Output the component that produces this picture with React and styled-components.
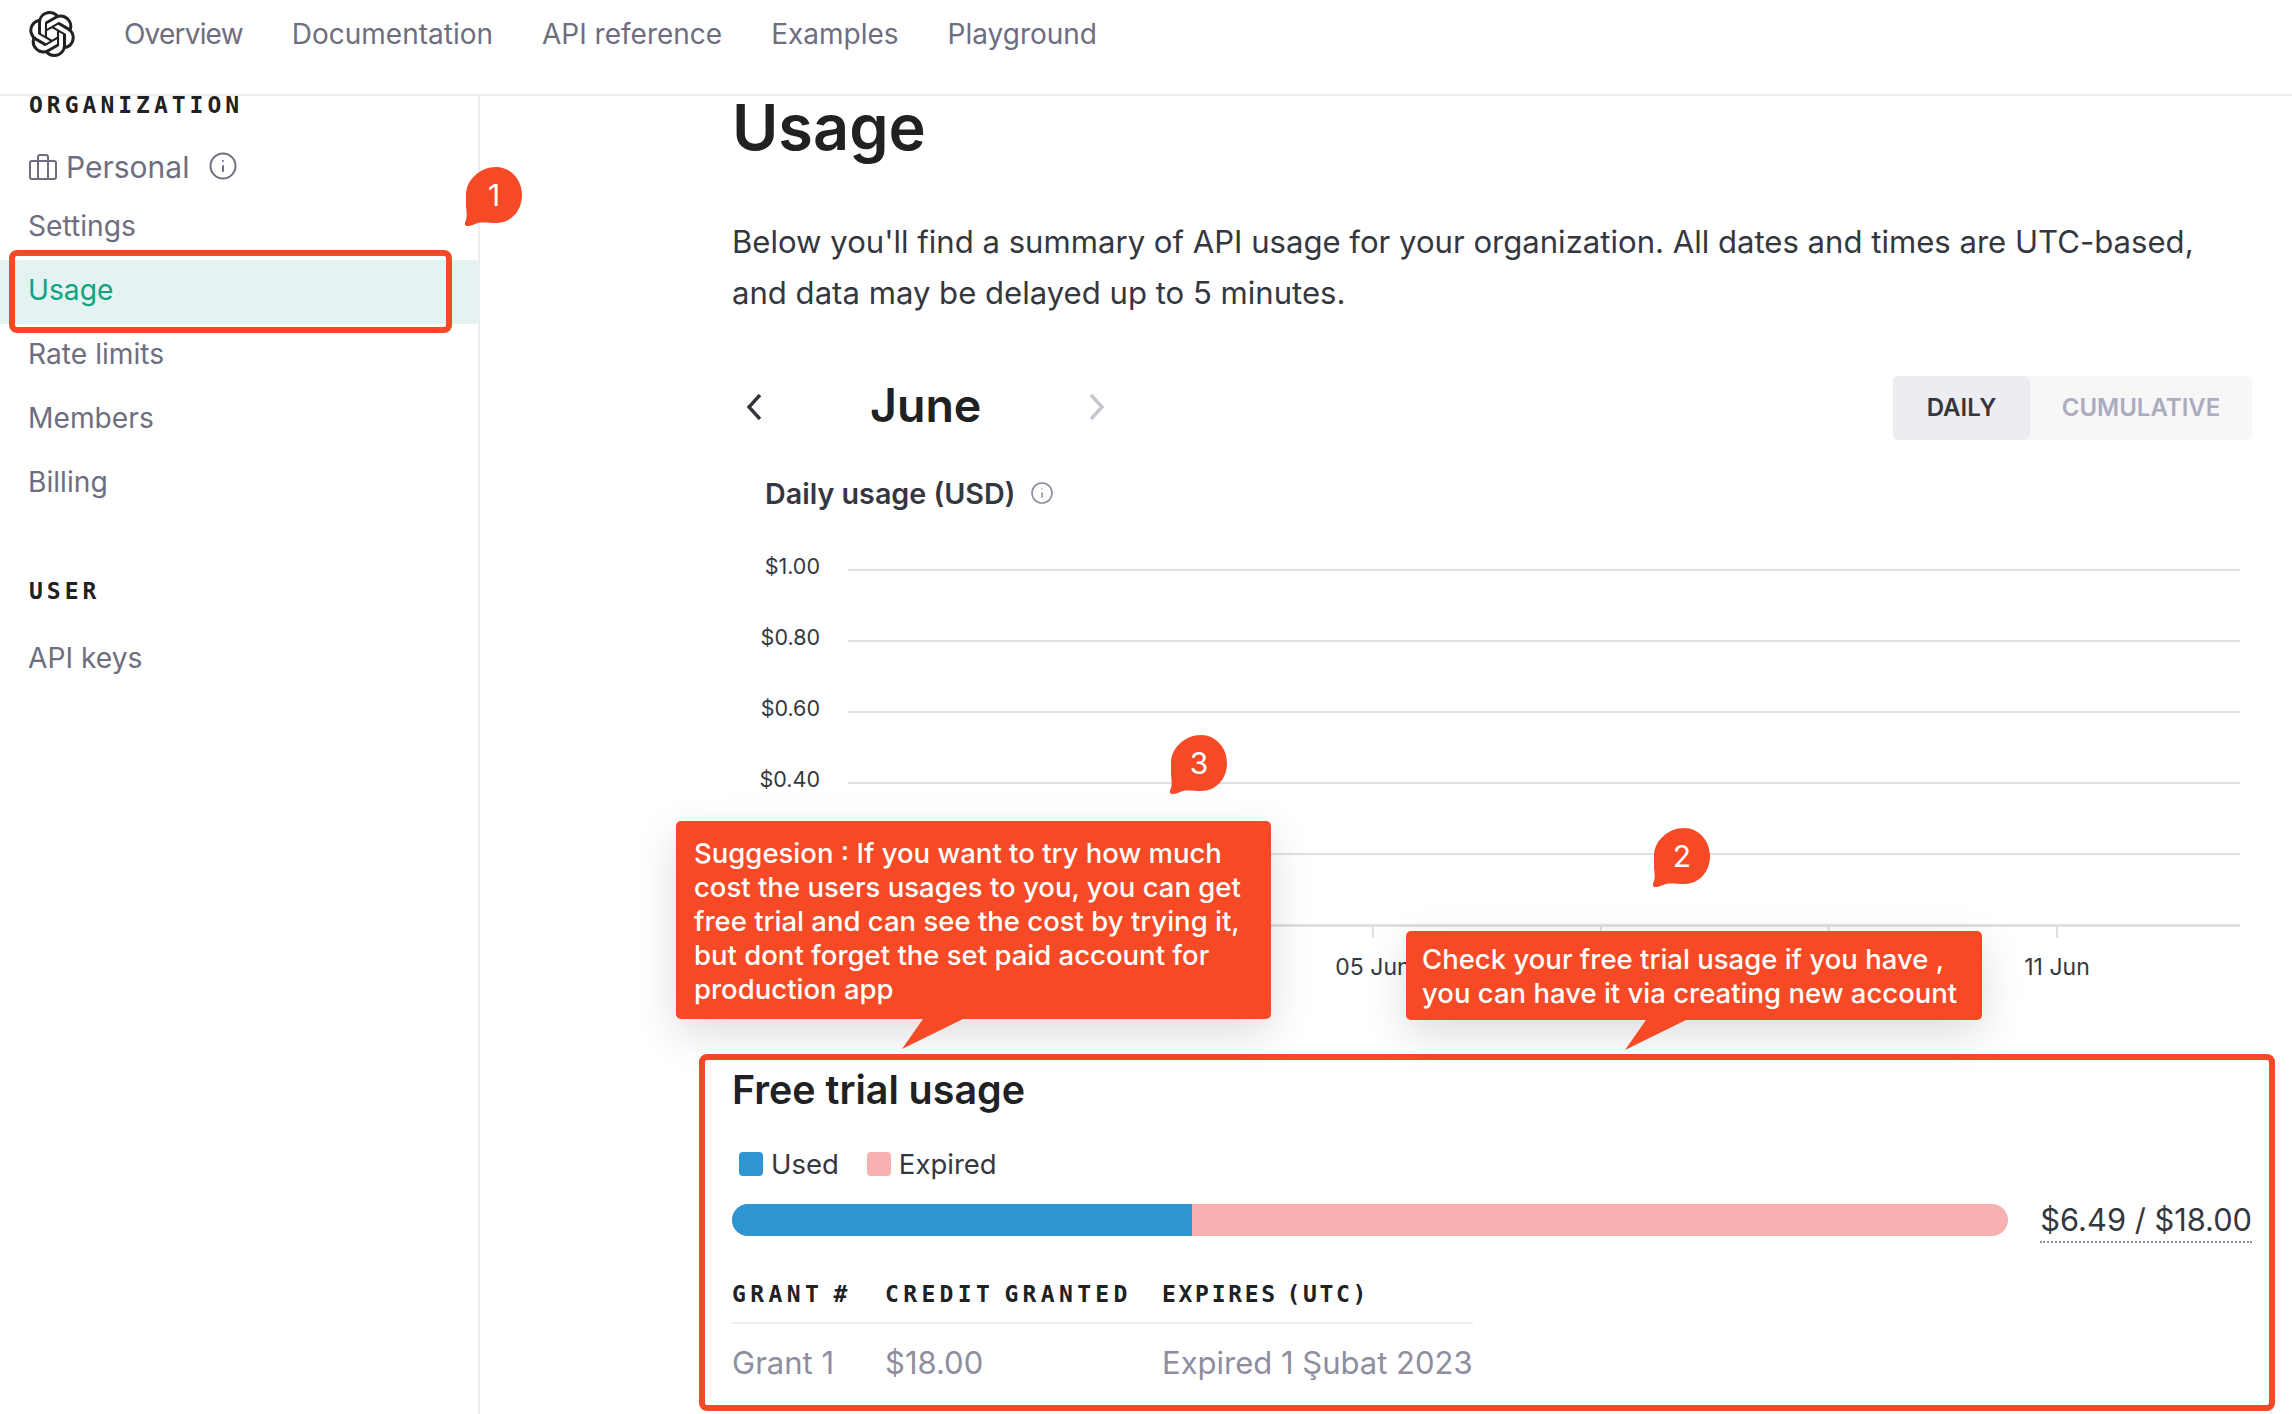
import styled, { createGlobalStyle } from "styled-components"
import { SiOpenai } from "react-icons/si"
import { Info } from "lucide-react"

const GlobalStyle = createGlobalStyle`
  html, body {
    margin: 0;
    padding: 0;
    background: #fff;
    font-family: Inter, "Noto Sans", sans-serif;
    color: #202123;
  }
`

const Page = styled.div`
  position: relative;
  width: 2292px;
  height: 1414px;
  overflow: hidden;
  background: #fff;
`

const TopBar = styled.header`
  display: flex;
  align-items: center;
  height: 96px;
  padding: 0 0 26px 29px;
  box-sizing: border-box;
  border-bottom: 2px solid #ececf1;
`

const Logo = styled(SiOpenai)`
  width: 46px;
  height: 46px;
  color: #202123;
  margin-right: 49px;
`

const NavLink = styled.a`
  font-size: 28px;
  line-height: 36px;
  color: #6e6e80;
  margin-right: 49px;

  &:first-of-type {
    letter-spacing: -0.8px;
  }
`

const Body = styled.div`
  display: flex;
  height: 1318px;
`

const Sidebar = styled.aside`
  width: 480px;
  flex: none;
  box-sizing: border-box;
  border-right: 2px solid #ececf1;
`

const SectionLabel = styled.div`
  font-family: "DejaVu Sans Mono", monospace;
  font-weight: 700;
  font-size: 23px;
  line-height: 18px;
  letter-spacing: 4px;
  color: #202123;
  padding-left: 29px;
  margin-top: ${(p) => p.$top}px;
`

const OrgRow = styled.div`
  display: flex;
  align-items: center;
  height: 40px;
  margin: 33px 0 9px;
  padding-left: 29px;
  font-size: 30px;
  color: #6e6e80;
  gap: 9px;
`

const InfoIcon = styled(Info)`
  color: ${(p) => p.$color};
  width: ${(p) => p.$size}px;
  height: ${(p) => p.$size}px;
  flex: none;
  margin-left: ${(p) => p.$left || 0}px;
  margin-top: ${(p) => p.$lift || 0}px;
`

const SideItem = styled.a`
  display: flex;
  align-items: center;
  height: 64px;
  box-sizing: border-box;
  padding: 0 0 4px 28px;
  margin-top: ${(p) => p.$top || 0}px;
  font-size: 28.2px;
  color: ${(p) => (p.$active ? "#10a37f" : "#6e6e80")};
  background: ${(p) => (p.$active ? "#e4f2f1" : "transparent")};
`

const Main = styled.main`
  flex: 1;
  min-width: 0;
  padding: 0 40px 0 252px;
`

const Title = styled.h1`
  margin: 0;
  font-size: 63px;
  line-height: 62px;
  font-weight: 600;
  color: #202123;
`

const Intro = styled.p`
  margin: 59px 0 0;
  font-size: 31.1px;
  line-height: 51px;
  white-space: nowrap;
  color: #353740;
`

const MonthRow = styled.div`
  display: flex;
  align-items: center;
  height: 64px;
  margin-top: 57px;
`

const MonthNav = styled.svg`
  width: 16px;
  height: 28px;
  flex: none;
  margin-left: ${(p) => p.$left}px;
  margin-bottom: 2px;
  fill: none;
  stroke: ${(p) => p.$color};
  stroke-width: 3.4;
`

const Month = styled.h2`
  margin: 0 0 6px 108px;
  width: 110px;
  font-size: 46.5px;
  font-weight: 600;
  white-space: nowrap;
  color: #202123;
`

const Toggle = styled.div`
  display: flex;
  margin-left: auto;
  height: 64px;
  background: #f7f7f8;
  border-radius: 6px;
`

const ToggleItem = styled.div`
  display: flex;
  align-items: center;
  justify-content: center;
  box-sizing: border-box;
  padding-bottom: 2px;
  width: ${(p) => p.$width}px;
  font-size: 24px;
  font-weight: 600;
  border-radius: 6px;
  color: ${(p) => (p.$active ? "#353740" : "#acacbe")};
  background: ${(p) => (p.$active ? "#ececf1" : "transparent")};
`

const ChartTitle = styled.div`
  display: flex;
  align-items: center;
  gap: 15px;
  height: 40px;
  margin: 33px 0 21px 33px;
  font-size: 28.7px;
  font-weight: 600;
  color: #353740;
`

const GridRow = styled.div`
  display: flex;
  align-items: ${(p) => (p.$axis ? "flex-end" : "center")};
  height: ${(p) => (p.$axis ? 38 : 71)}px;
  gap: 28px;
  width: 1508px;
`

const YLabel = styled.span`
  width: 88px;
  flex: none;
  text-align: right;
  font-size: 21.5px;
  line-height: 26px;
  color: #353740;
  margin-bottom: 8px;
`

const GridLine = styled.div`
  flex: 1;
  height: ${(p) => (p.$axis ? 3 : 2)}px;
  background: #e0e0e0;
`

const XAxis = styled.div`
  display: flex;
  margin-left: 71px;
  height: 55px;
`

const XTick = styled.div`
  width: 228px;
  flex: none;
  display: flex;
  flex-direction: column;
  align-items: center;
  font-size: 23px;
  line-height: 30px;
  color: #353740;

  &::before {
    content: "";
    width: 2px;
    height: 11px;
    margin-bottom: 14px;
    background: #e0e0e0;
  }
`

const SubTitle = styled.h2`
  margin: 86px 0 0;
  font-size: 39.4px;
  line-height: 44px;
  font-weight: 600;
  color: #202123;
`

const Legend = styled.div`
  display: flex;
  align-items: center;
  height: 32px;
  margin: 36px 0 24px 7px;
  font-size: 27.5px;
  color: #353740;
`

const Swatch = styled.span`
  width: 24px;
  height: 24px;
  border-radius: 4px;
  margin-right: 8px;
  background: ${(p) => p.$color};
`

const LegendText = styled.span`
  margin-right: 28px;
`

const BarRow = styled.div`
  display: flex;
  align-items: center;
  gap: 32px;
  height: 32px;
`

const Bar = styled.div`
  flex: 1;
  display: flex;
  height: 32px;
  border-radius: 16px;
  overflow: hidden;
  background: #f7b1b1;
`

const BarUsed = styled.div`
  background: #2e95d3;
`

const Amount = styled.span`
  font-size: 30.8px;
  line-height: 36px;
  padding: 5px 0 3px;
  white-space: nowrap;
  color: #353740;
  border-bottom: 2px dotted #8e8ea0;
`

const GrantTable = styled.div`
  display: grid;
  grid-template-columns: 153px 277px 311px;
  width: 741px;
  margin-top: 32px;
`

const HeadCell = styled.div`
  font-family: "DejaVu Sans Mono", monospace;
  font-weight: 700;
  font-size: 23px;
  line-height: 52px;
  height: 54px;
  white-space: nowrap;
  word-spacing: -8px;
  letter-spacing: ${(p) => p.$spacing}px;
  color: #202123;
  border-bottom: 2px solid #ececf1;
`

const Cell = styled.div`
  font-size: 31px;
  line-height: 78px;
  white-space: nowrap;
  color: #8e8ea0;
`

const Highlight = styled.div`
  position: absolute;
  left: ${(p) => p.$left}px;
  top: ${(p) => p.$top}px;
  width: ${(p) => p.$width}px;
  height: ${(p) => p.$height}px;
  box-sizing: border-box;
  border: 6px solid #f54a25;
  border-radius: 8px;
`

const Callout = styled.div`
  position: absolute;
  left: ${(p) => p.$left}px;
  top: ${(p) => p.$top}px;
  width: ${(p) => p.$width}px;
  box-sizing: border-box;
  padding: ${(p) => p.$pad}px 10px 0 ${(p) => p.$inset}px;
  height: ${(p) => p.$height}px;
  background: #f54a25;
  border-radius: 5px;
  color: #fff;
  font-size: 27.5px;
  line-height: 34px;
  font-weight: 500;
  box-shadow: 0 14px 44px rgba(0, 0, 0, 0.14);

  &::after {
    content: "";
    position: absolute;
    left: ${(p) => p.$tail}px;
    top: 100%;
    width: 61px;
    height: 30px;
    background: #f54a25;
    clip-path: polygon(21px 0, 61px 0, 0 30px);
  }
`

const BubbleWrap = styled.div`
  position: absolute;
  left: ${(p) => p.$left}px;
  top: ${(p) => p.$top}px;
  width: 58px;
  height: 60px;
`

const BubbleNumber = styled.span`
  position: absolute;
  left: 0;
  top: 0;
  width: 58px;
  text-align: center;
  font-size: 30px;
  line-height: 56px;
  color: #fff;
`

function Bubble({ left, top, n }) {
  return (
    <BubbleWrap $left={left} $top={top}>
      <svg width="58" height="60" viewBox="0 0 58 60">
        <path
          fill="#f54a25"
          d="M31 0C46 0 57 13 57 28C57 44 46 56 31 56C24 56 18 55 13 56C9 57 6 59 3 59C0 59 -1 57 0 55C2 52 2 47 1 40C1 36 1 32 1 28C1 13 15 0 31 0Z"
        />
      </svg>
      <BubbleNumber>{n}</BubbleNumber>
    </BubbleWrap>
  )
}

function Briefcase() {
  return (
    <svg width="28" height="26" viewBox="0 0 28 26" fill="none" stroke="#6e6e80" strokeWidth="2">
      <rect x="1" y="7" width="26" height="18" rx="2" />
      <path d="M9 7V25M19 7V25M9 7V3a2 2 0 0 1 2-2h6a2 2 0 0 1 2 2v4" />
    </svg>
  )
}

const navLinks = ["Overview", "Documentation", "API reference", "Examples", "Playground"]
// the last y labels and the middle x labels sit behind the callouts
const yLabels = ["$1.00", "$0.80", "$0.60", "$0.40", ""]
const xLabels = ["", "", "05 Jun", "", "", "11 Jun"]

function App() {
  return (
    <Page>
      <GlobalStyle />
      <TopBar>
        <Logo />
        {navLinks.map((l) => (
          <NavLink key={l}>{l}</NavLink>
        ))}
      </TopBar>
      <Body>
        <Sidebar>
          <SectionLabel $top={0}>ORGANIZATION</SectionLabel>
          <OrgRow>
            <Briefcase />
            Personal
            <InfoIcon $size={30} $left={10} $lift={-2} $color="#6e6e80" strokeWidth={1.6} />
          </OrgRow>
          <SideItem>Settings</SideItem>
          <SideItem $active>Usage</SideItem>
          <SideItem>Rate limits</SideItem>
          <SideItem>Members</SideItem>
          <SideItem>Billing</SideItem>
          <SectionLabel $top={66}>USER</SectionLabel>
          <SideItem $top={28}>API keys</SideItem>
        </Sidebar>
        <Main>
          <Title>Usage</Title>
          <Intro>
            Below you'll find a summary of API usage for your organization. All dates and times are UTC-based,
            <br />
            and data may be delayed up to 5 minutes.
          </Intro>
          <MonthRow>
            <MonthNav $left={14} $color="#353740" viewBox="0 0 16 28">
              <path d="M14 2L3 14L14 26" />
            </MonthNav>
            <Month>June</Month>
            <MonthNav $left={109} $color="#c5c5d2" viewBox="0 0 16 28">
              <path d="M2 2L13 14L2 26" />
            </MonthNav>
            <Toggle>
              <ToggleItem $active $width={137}>DAILY</ToggleItem>
              <ToggleItem $width={222}>CUMULATIVE</ToggleItem>
            </Toggle>
          </MonthRow>
          <ChartTitle>
            Daily usage (USD)
            <InfoIcon $size={24} $color="#8e8ea0" strokeWidth={1.6} />
          </ChartTitle>
          {yLabels.map((l, idx) => (
            <GridRow key={idx}>
              <YLabel>{l}</YLabel>
              <GridLine />
            </GridRow>
          ))}
          <GridRow $axis>
            <YLabel />
            <GridLine $axis />
          </GridRow>
          <XAxis>
            {xLabels.map((l, idx) => (
              <XTick key={idx}>{l}</XTick>
            ))}
          </XAxis>
          <SubTitle>Free trial usage</SubTitle>
          <Legend>
            <Swatch $color="#2e95d3" />
            <LegendText>Used</LegendText>
            <Swatch $color="#f7b1b1" />
            <LegendText>Expired</LegendText>
          </Legend>
          <BarRow>
            <Bar>
              <BarUsed style={{ width: `${(6.49 / 18) * 100}%` }} />
            </Bar>
            <Amount>$6.49 / $18.00</Amount>
          </BarRow>
          <GrantTable>
            <HeadCell $spacing={4.4}>GRANT #</HeadCell>
            <HeadCell $spacing={4.35}>CREDIT GRANTED</HeadCell>
            <HeadCell $spacing={2.7}>EXPIRES (UTC)</HeadCell>
            <Cell>Grant 1</Cell>
            <Cell>$18.00</Cell>
            <Cell>Expired 1 Şubat 2023</Cell>
          </GrantTable>
        </Main>
      </Body>

      <Highlight $left={9} $top={250} $width={443} $height={83} />
      <Highlight $left={699} $top={1054} $width={1576} $height={357} />
      <Bubble left={465} top={167} n="1" />
      <Bubble left={1653} top={828} n="2" />
      <Bubble left={1170} top={735} n="3" />
      <Callout $left={676} $top={821} $width={595} $height={198} $pad={15} $inset={18} $tail={226}>
        Suggesion : If you want to try how much cost the users usages to you, you can get free trial and can see the cost by trying it, but dont forget the set paid account for production app
      </Callout>
      <Callout $left={1406} $top={931} $width={576} $height={89} $pad={11} $inset={16} $tail={219}>
        Check your free trial usage if you have , you can have it via creating new account
      </Callout>
    </Page>
  )
}

export default App
